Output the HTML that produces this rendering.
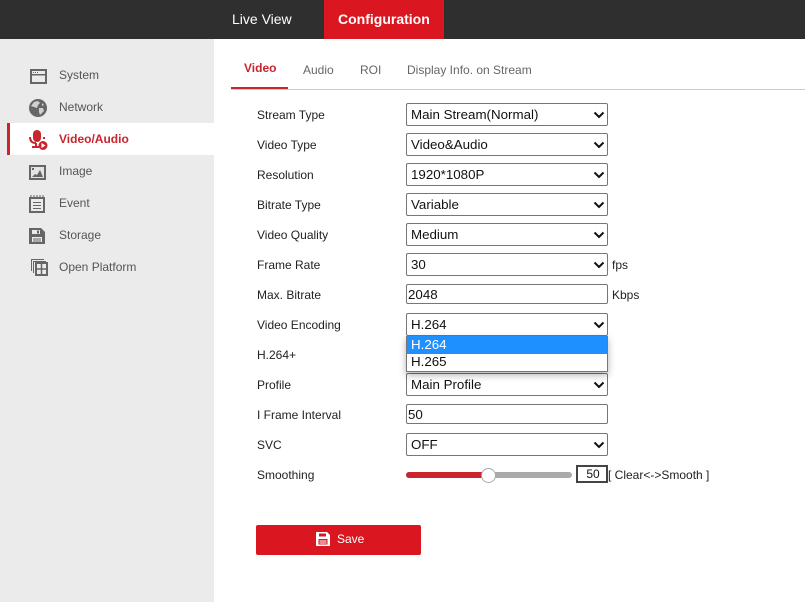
<!DOCTYPE html>
<html><head><meta charset="utf-8"><style>
*{box-sizing:border-box}
html,body{margin:0;padding:0;width:805px;height:602px;overflow:hidden;background:#fff;font-family:"Liberation Sans",sans-serif;font-size:12px;color:#333}
.a{position:absolute;white-space:nowrap}
.nav{left:59px;color:#555;line-height:16px;font-size:12px}
.lab{left:257px;line-height:16px;color:#222}
.sel,.inp{position:absolute;left:406px;width:202px;height:23px;border:1px solid #767676;border-radius:2px;background:#fff;font-size:13.33px;line-height:21px;padding-left:4px;color:#111;white-space:nowrap}
.sel svg{position:absolute;right:2px;top:7px}
.tab{top:62px;line-height:16px;color:#666}
svg.i{position:absolute}
</style></head><body>
<div class="a" style="left:0;top:0;width:805px;height:39px;background:#2f2f2f"></div>
<div class="a" style="left:324px;top:0;width:120px;height:39px;background:#da1720"></div>
<div class="a" style="left:232px;top:11px;font-size:14px;line-height:16px;color:#fff">Live View</div>
<div class="a" style="left:338px;top:11px;font-size:14px;line-height:16px;color:#fff;font-weight:bold">Configuration</div>

<div class="a" style="left:0;top:39px;width:214px;height:563px;background:#ebebeb"></div>
<div class="a" style="left:7px;top:123px;width:207px;height:32px;background:#fff"></div>
<div class="a" style="left:7px;top:123px;width:3px;height:32px;background:#c9252d"></div>

<svg class="i" style="left:30px;top:69px" width="17" height="15" viewBox="0 0 17 15"><rect x="1" y="1" width="15" height="13" fill="none" stroke="#666" stroke-width="2"/><rect x="2" y="5" width="13" height="1.500" fill="#666"/><path d="M3 3.500h1M5 3.500h1M7 3.500h1" stroke="#666"/></svg>
<svg class="i" style="left:29px;top:99px" width="18" height="18" viewBox="0 0 18 18"><circle cx="9" cy="9" r="9" fill="#666"/><path d="M5 3l4-1 2 2-2 2-1 3-3-1-3-1zM10 9l4 0 1 3-4 4-1-3zM13 4l2 2-2 1z" fill="#ebebeb" opacity=".8"/></svg>
<svg class="i" style="left:29px;top:130px" width="19" height="20" viewBox="0 0 19 20"><rect x="4" y="0" width="8" height="12" rx="4" fill="#c9252d"/><path d="M1 7c0 4 2 6 6 6M7 13v3M3 17h7" fill="none" stroke="#c9252d" stroke-width="2"/><rect x="14" y="7" width="2" height="2" fill="#c9252d"/><circle cx="14" cy="15.500" r="4.500" fill="#c9252d"/><path d="M12.500 13l4 2.500-4 2.500z" fill="#fff"/></svg>
<svg class="i" style="left:29px;top:165px" width="17" height="15" viewBox="0 0 17 15"><rect x="1" y="1" width="15" height="13" fill="#e4e4e4" stroke="#666" stroke-width="2"/><rect x="3" y="3" width="2" height="2" fill="#666"/><path d="M3 12l3-3 2 1 3-5 3 7z" fill="#666"/></svg>
<svg class="i" style="left:29px;top:195px" width="16" height="18" viewBox="0 0 16 18"><rect x="1" y="3" width="14" height="14" fill="none" stroke="#666" stroke-width="2"/><path d="M2 0v3M5 0v3M8 0v3M11 0v3M14 0v3" stroke="#666"/><path d="M4 7.500h8M4 10.500h8M4 13.500h8" stroke="#666"/></svg>
<svg class="i" style="left:29px;top:228px" width="16" height="16" viewBox="0 0 16 16"><path d="M0 0h12l4 4v12H0z" fill="#666"/><rect x="3" y="2" width="8" height="4" fill="#ebebeb"/><rect x="8" y="2.500" width="2" height="3" fill="#666"/><rect x="3" y="9" width="10" height="5" fill="#ebebeb"/><path d="M4 11h8M4 13h8" stroke="#666"/></svg>
<svg class="i" style="left:31px;top:259px" width="17" height="17" viewBox="0 0 17 17"><path d="M.5 12V.5H13" fill="none" stroke="#666"/><path d="M2.500 14V2.500H15" fill="none" stroke="#666"/><rect x="5" y="4" width="11" height="12" fill="#ebebeb" stroke="#666" stroke-width="2"/><path d="M10.500 4v12M5 10h11" stroke="#666" stroke-width="1.500"/></svg>

<div class="a nav" style="top:67px">System</div>
<div class="a nav" style="top:99px">Network</div>
<div class="a nav" style="top:131px;color:#c9252d;font-weight:bold">Video/Audio</div>
<div class="a nav" style="top:163px">Image</div>
<div class="a nav" style="top:195px">Event</div>
<div class="a nav" style="top:227px">Storage</div>
<div class="a nav" style="top:259px">Open Platform</div>

<div class="a tab" style="left:244px;top:60px;color:#c9252d;font-weight:bold">Video</div>
<div class="a tab" style="left:303px">Audio</div>
<div class="a tab" style="left:360px">ROI</div>
<div class="a tab" style="left:407px">Display Info. on Stream</div>
<div class="a" style="left:231px;top:89px;width:574px;height:1px;background:#ccc"></div>
<div class="a" style="left:231px;top:87px;width:57px;height:2px;background:#c9252d"></div>

<div class="a lab" style="top:107px">Stream Type</div>
<div class="a lab" style="top:137px">Video Type</div>
<div class="a lab" style="top:167px">Resolution</div>
<div class="a lab" style="top:197px">Bitrate Type</div>
<div class="a lab" style="top:227px">Video Quality</div>
<div class="a lab" style="top:257px">Frame Rate</div>
<div class="a lab" style="top:287px">Max. Bitrate</div>
<div class="a lab" style="top:317px">Video Encoding</div>
<div class="a lab" style="top:347px">H.264+</div>
<div class="a lab" style="top:377px">Profile</div>
<div class="a lab" style="top:407px">I Frame Interval</div>
<div class="a lab" style="top:437px">SVC</div>
<div class="a lab" style="top:467px">Smoothing</div>

<div class="sel" style="top:103px">Main Stream(Normal)<svg width="12" height="9" viewBox="0 0 12 9"><path d="M1.500 1.500L6 6l4.500-4.500" fill="none" stroke="#111" stroke-width="2"/></svg></div>
<div class="sel" style="top:133px">Video&amp;Audio<svg width="12" height="9" viewBox="0 0 12 9"><path d="M1.500 1.500L6 6l4.500-4.500" fill="none" stroke="#111" stroke-width="2"/></svg></div>
<div class="sel" style="top:163px">1920*1080P<svg width="12" height="9" viewBox="0 0 12 9"><path d="M1.500 1.500L6 6l4.500-4.500" fill="none" stroke="#111" stroke-width="2"/></svg></div>
<div class="sel" style="top:193px">Variable<svg width="12" height="9" viewBox="0 0 12 9"><path d="M1.500 1.500L6 6l4.500-4.500" fill="none" stroke="#111" stroke-width="2"/></svg></div>
<div class="sel" style="top:223px">Medium<svg width="12" height="9" viewBox="0 0 12 9"><path d="M1.500 1.500L6 6l4.500-4.500" fill="none" stroke="#111" stroke-width="2"/></svg></div>
<div class="sel" style="top:253px">30<svg width="12" height="9" viewBox="0 0 12 9"><path d="M1.500 1.500L6 6l4.500-4.500" fill="none" stroke="#111" stroke-width="2"/></svg></div>
<div class="inp" style="top:284px;height:20px;line-height:19px;padding-left:1px">2048</div>
<div class="sel" style="top:313px">H.264<svg width="12" height="9" viewBox="0 0 12 9"><path d="M1.500 1.500L6 6l4.500-4.500" fill="none" stroke="#111" stroke-width="2"/></svg></div>
<div class="sel" style="top:373px">Main Profile<svg width="12" height="9" viewBox="0 0 12 9"><path d="M1.500 1.500L6 6l4.500-4.500" fill="none" stroke="#111" stroke-width="2"/></svg></div>
<div class="inp" style="top:404px;height:20px;line-height:19px;padding-left:1px">50</div>
<div class="sel" style="top:433px">OFF<svg width="12" height="9" viewBox="0 0 12 9"><path d="M1.500 1.500L6 6l4.500-4.500" fill="none" stroke="#111" stroke-width="2"/></svg></div>

<div class="a" style="left:612px;top:257px;line-height:16px;color:#222">fps</div>
<div class="a" style="left:612px;top:287px;line-height:16px;color:#222">Kbps</div>

<div class="a" style="left:406px;top:336px;width:202px;height:36px;background:#fff;border:1px solid #767676;border-top:0;box-shadow:0 3px 7px rgba(0,0,0,.3);font-size:13.33px;line-height:17px;color:#111">
<div style="background:#1e90ff;color:#fff;height:18px;padding-left:4px;line-height:17px">H.264</div>
<div style="height:17px;padding-left:4px;line-height:15px">H.265</div>
</div>

<div class="a" style="left:406px;top:472px;width:166px;height:6px;background:#aaa;border-radius:3px"></div>
<div class="a" style="left:406px;top:472px;width:82px;height:6px;background:#c9252d;border-radius:3px 0 0 3px"></div>
<div class="a" style="left:481px;top:468px;width:15px;height:15px;background:#fff;border:1px solid #aaa;border-radius:50%"></div>
<div class="a" style="left:576px;top:465px;width:32px;height:18px;border:2px solid #444;font-size:12px;line-height:14px;text-align:center;color:#111;padding-left:2px">50</div>
<div class="a" style="left:608px;top:467px;line-height:16px;color:#222">[ Clear&lt;-&gt;Smooth ]</div>

<div class="a" style="left:256px;top:525px;width:165px;height:30px;background:#da1720;border-radius:2px"></div>
<svg class="i" style="left:316px;top:532px" width="14" height="14" viewBox="0 0 14 14"><path d="M0 0h11l3 3v11H0z" fill="#fff"/><rect x="3" y="1.500" width="7" height="3" fill="#da1720"/><rect x="2.500" y="7" width="9" height="5.500" fill="#da1720"/><rect x="3.500" y="8.500" width="7" height="1" fill="#fff"/><rect x="3.500" y="10.500" width="7" height="1" fill="#fff"/></svg>
<div class="a" style="left:337px;top:531px;line-height:16px;color:#fff;font-size:12px">Save</div>
</body></html>
